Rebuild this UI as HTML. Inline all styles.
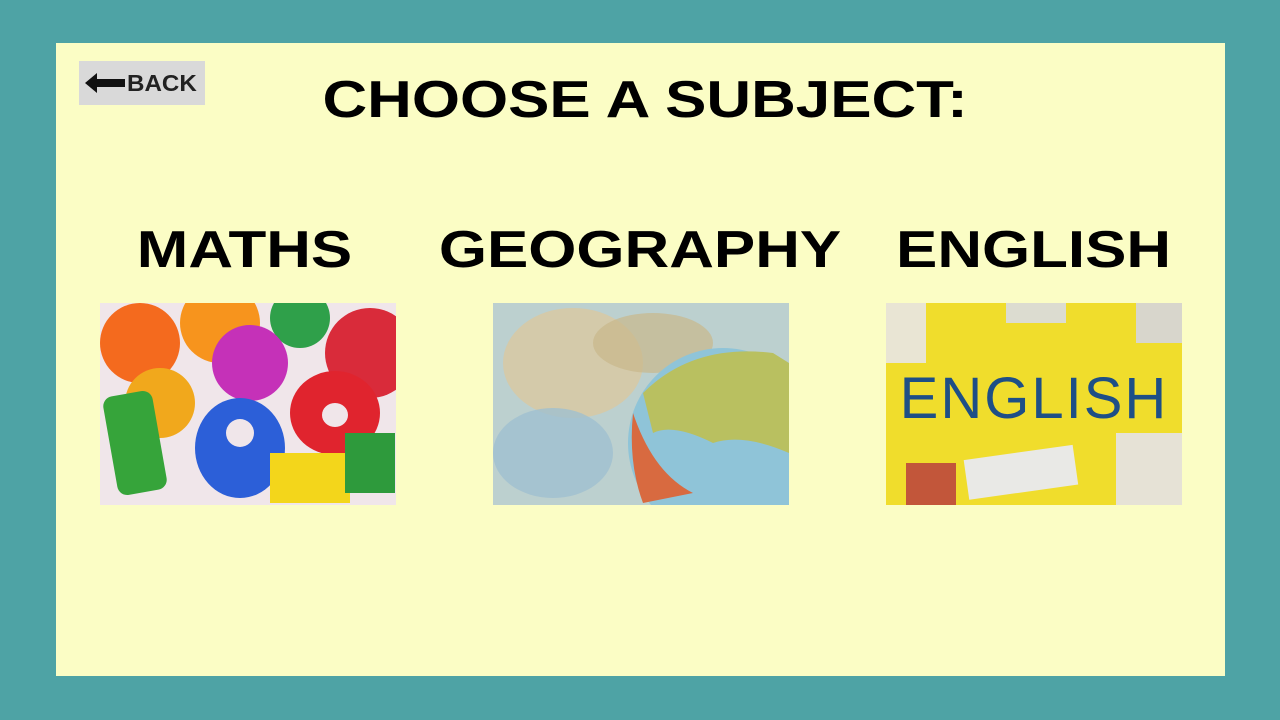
<!DOCTYPE html>
<html><head><meta charset="utf-8"><style>
*{margin:0;padding:0;box-sizing:border-box}
body{width:1280px;height:720px;background:#4ea3a5;position:relative;overflow:hidden;font-family:"Liberation Sans",sans-serif}
#panel{position:absolute;left:56px;top:43px;width:1169px;height:633px;background:#fbfdc5}
#back{position:absolute;left:79px;top:61px;width:126px;height:44px;background:#d9d9d9;display:flex;align-items:center;padding-left:4px}
#back span{font-size:23px;color:#222;font-weight:bold;transform:scaleX(1.05);transform-origin:left}
.t{position:absolute;text-align:center;font-weight:bold;color:#000;font-size:52px;line-height:60px}
.t span{display:inline-block;transform:scaleX(1.19)}
.img{position:absolute;top:303px;width:296px;height:202px;overflow:hidden}
</style></head><body>
<div id="panel"></div>
<div id="back"><svg width="44" height="26" viewBox="0 0 44 26"><path d="M2 13 L14 3 L14 9 L42 9 L42 17 L14 17 L14 23 Z" fill="#111"/></svg><span>BACK</span></div>
<div class="t" style="left:245px;width:800px;top:70px"><span style="transform:scaleX(1.19)">CHOOSE A SUBJECT:</span></div>
<div class="t" style="left:45px;width:400px;top:220px"><span>MATHS</span></div>
<div class="t" style="left:390px;width:500px;top:220px"><span>GEOGRAPHY</span></div>
<div class="t" style="left:834px;width:400px;top:220px"><span>ENGLISH</span></div>

<div class="img" style="left:100px;background:#f4e2e0">
<svg width="296" height="202">
<rect x="0" y="0" width="296" height="202" fill="#f0e6ea"/>
<circle cx="40" cy="40" r="40" fill="#f46a1e"/>
<circle cx="120" cy="20" r="40" fill="#f7941d"/>
<circle cx="200" cy="15" r="30" fill="#2fa04a"/>
<circle cx="270" cy="50" r="45" fill="#d92b3a"/>
<circle cx="150" cy="60" r="38" fill="#c531b8"/>
<circle cx="60" cy="100" r="35" fill="#f1a81c"/>
<rect x="10" y="90" width="50" height="100" rx="10" fill="#36a43a" transform="rotate(-10 35 140)"/>
<ellipse cx="140" cy="145" rx="45" ry="50" fill="#2c5fd8"/>
<ellipse cx="140" cy="130" rx="14" ry="14" fill="#f0e6ea"/>
<ellipse cx="235" cy="110" rx="45" ry="42" fill="#e0242e"/>
<ellipse cx="235" cy="112" rx="13" ry="12" fill="#f0e6ea"/>
<rect x="170" y="150" width="80" height="50" fill="#f3d61b"/>
<rect x="245" y="130" width="50" height="60" fill="#2e9a3c"/>
</svg></div>

<div class="img" style="left:493px;background:#b6c9c6">
<svg width="296" height="202">
<rect width="296" height="202" fill="#bcd0cf"/>
<ellipse cx="80" cy="60" rx="70" ry="55" fill="#d9c8a0" opacity=".8"/>
<ellipse cx="160" cy="40" rx="60" ry="30" fill="#c9b88a" opacity=".7"/>
<ellipse cx="60" cy="150" rx="60" ry="45" fill="#9fbfd0" opacity=".8"/>
<circle cx="230" cy="140" r="95" fill="#8fc4d8"/>
<path d="M150 90 Q200 40 280 50 L296 60 L296 150 Q250 130 220 140 Q180 120 160 130 Z" fill="#b9c060"/>
<path d="M140 110 Q160 170 200 190 L150 200 Q135 160 140 110Z" fill="#d86a40"/>
</svg></div>

<div class="img" style="left:886px;background:#f1e02a">
<svg width="296" height="202">
<rect width="296" height="202" fill="#f0dd2c"/>
<rect x="0" y="0" width="40" height="60" fill="#e9e5d4"/>
<rect x="120" y="0" width="60" height="20" fill="#dcdcd0"/>
<rect x="250" y="0" width="46" height="40" fill="#d8d6cc"/>
<rect x="230" y="130" width="66" height="72" fill="#e6e2d6"/>
<rect x="80" y="150" width="110" height="40" fill="#e9e9e6" transform="rotate(-8 130 170)"/>
<rect x="20" y="160" width="50" height="42" fill="#c2563a"/>
<text x="148" y="115" text-anchor="middle" font-family="Liberation Sans,sans-serif" font-size="58" fill="#1e4f86" letter-spacing="2">ENGLISH</text>
</svg></div>
</body></html>
